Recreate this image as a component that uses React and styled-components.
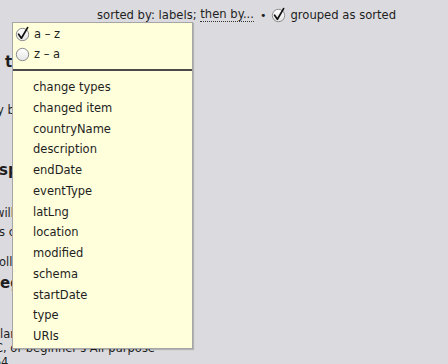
import React from "react";
import styled, { createGlobalStyle } from "styled-components";

const GlobalStyle = createGlobalStyle`
  html, body {
    margin: 0;
    padding: 0;
    background: #dbdbdf;
    overflow: hidden;
  }
  body {
    font-family: "DejaVu Sans", Verdana, sans-serif;
    font-size: 11px;
    color: #1e1e1e;
  }
`;

const items = [
  "change types",
  "changed item",
  "countryName",
  "description",
  "endDate",
  "eventType",
  "latLng",
  "location",
  "modified",
  "schema",
  "startDate",
  "type",
  "URIs",
];

// page text lying under the popup; only its left edge shows
const lines = [
  { text: "th", heading: true, gap: 22, shift: 5 },
  { text: "y b", gap: 31, shift: -3 },
  { text: "sp", heading: true, gap: 43, shift: -1 },
  { text: "will", gap: 26, shift: -5 },
  { text: "s c", gap: 5, shift: -1 },
  { text: "oll", gap: 16, shift: -1 },
  { text: "eg", heading: true, gap: 4, shift: 0 },
  { text: "lar", gap: 34, shift: 0 },
  { text: "C, or beginner's All-purpose", gap: 0, shift: -5 },
  { text: "1964", gap: 0, shift: -21 },
];

const RadioIcon = ({ checked }) => (
  <svg width="17" height="16" viewBox="0 0 17 16">
    <defs>
      <linearGradient id="rg" x1="0" y1="0" x2="0" y2="1">
        <stop offset="0" stopColor="#ffffff" />
        <stop offset="1" stopColor="#e4e4e4" />
      </linearGradient>
    </defs>
    <circle cx="7.5" cy="8.5" r="6.2" fill="url(#rg)" stroke="#8c8c8c" strokeWidth="1" />
    {checked && (
      <path
        d="M3.6 8.2 L6.4 12.2 L12.6 1.6"
        fill="none"
        stroke="#111"
        strokeWidth="1.7"
        strokeLinecap="round"
        strokeLinejoin="round"
      />
    )}
  </svg>
);

const App = () => {
  return (
    <>
      <GlobalStyle />
      <Page>
        <TopBar>
          sorted by: labels; <Dotted>then by...</Dotted>
          <Bullet>•</Bullet>
          <RadioIcon checked />
          <span>grouped as sorted</span>
        </TopBar>
        <Content>
          {lines.map((l, i) => (
            <Line key={i} $heading={l.heading} $gap={l.gap} $shift={l.shift}>
              {l.text}
            </Line>
          ))}
        </Content>

        <Popup>
          <Option>
            <RadioIcon checked />
            <span>a – z</span>
          </Option>
          <Option>
            <RadioIcon />
            <span>z – a</span>
          </Option>
          <Separator />
          {items.map((it) => (
            <Item key={it}>{it}</Item>
          ))}
        </Popup>
      </Page>
    </>
  );
};

const Page = styled.div`
  position: relative;
  width: 448px;
  height: 364px;
  overflow: hidden;
`;

const TopBar = styled.div`
  height: 30px;
  display: flex;
  align-items: center;
  padding-left: 97px;
  white-space: pre;
  font-size: 11.6px;
  svg {
    margin: 0 2px 0 5px;
  }
`;

const Dotted = styled.span`
  border-bottom: 1px dotted #333;
  line-height: 13px;
`;

const Bullet = styled.span`
  margin-left: 6px;
  font-size: 11px;
`;

const Content = styled.div`
  display: flex;
  flex-direction: column;
`;

const Line = styled.div`
  height: ${(p) => (p.$heading ? 20 : 14)}px;
  line-height: ${(p) => (p.$heading ? 20 : 14)}px;
  margin-top: ${(p) => p.$gap}px;
  margin-left: ${(p) => p.$shift}px;
  font-size: ${(p) => (p.$heading ? 15 : 11.5)}px;
  font-weight: ${(p) => (p.$heading ? 700 : 400)};
  white-space: nowrap;
`;

const Popup = styled.div`
  position: absolute;
  left: 12px;
  top: 22px;
  width: 179px;
  height: 324px;
  background: #ffffdc;
  border: 1px solid #a6a6a6;
  box-shadow: 1px 1px 1px rgba(0, 0, 0, 0.18);
  padding-top: 1px;
  box-sizing: content-box;
`;

const Option = styled.div`
  height: 20px;
  display: flex;
  align-items: center;
  padding-left: 2px;
  gap: 2px;
  font-size: 11.5px;
`;

const Separator = styled.div`
  height: 2px;
  background: #4a4a4a;
  margin: 5px 0 6px;
`;

const Item = styled.div`
  height: 20.75px;
  line-height: 20.75px;
  padding-left: 20px;
  font-size: 11.5px;
  white-space: nowrap;
`;

export default App;
